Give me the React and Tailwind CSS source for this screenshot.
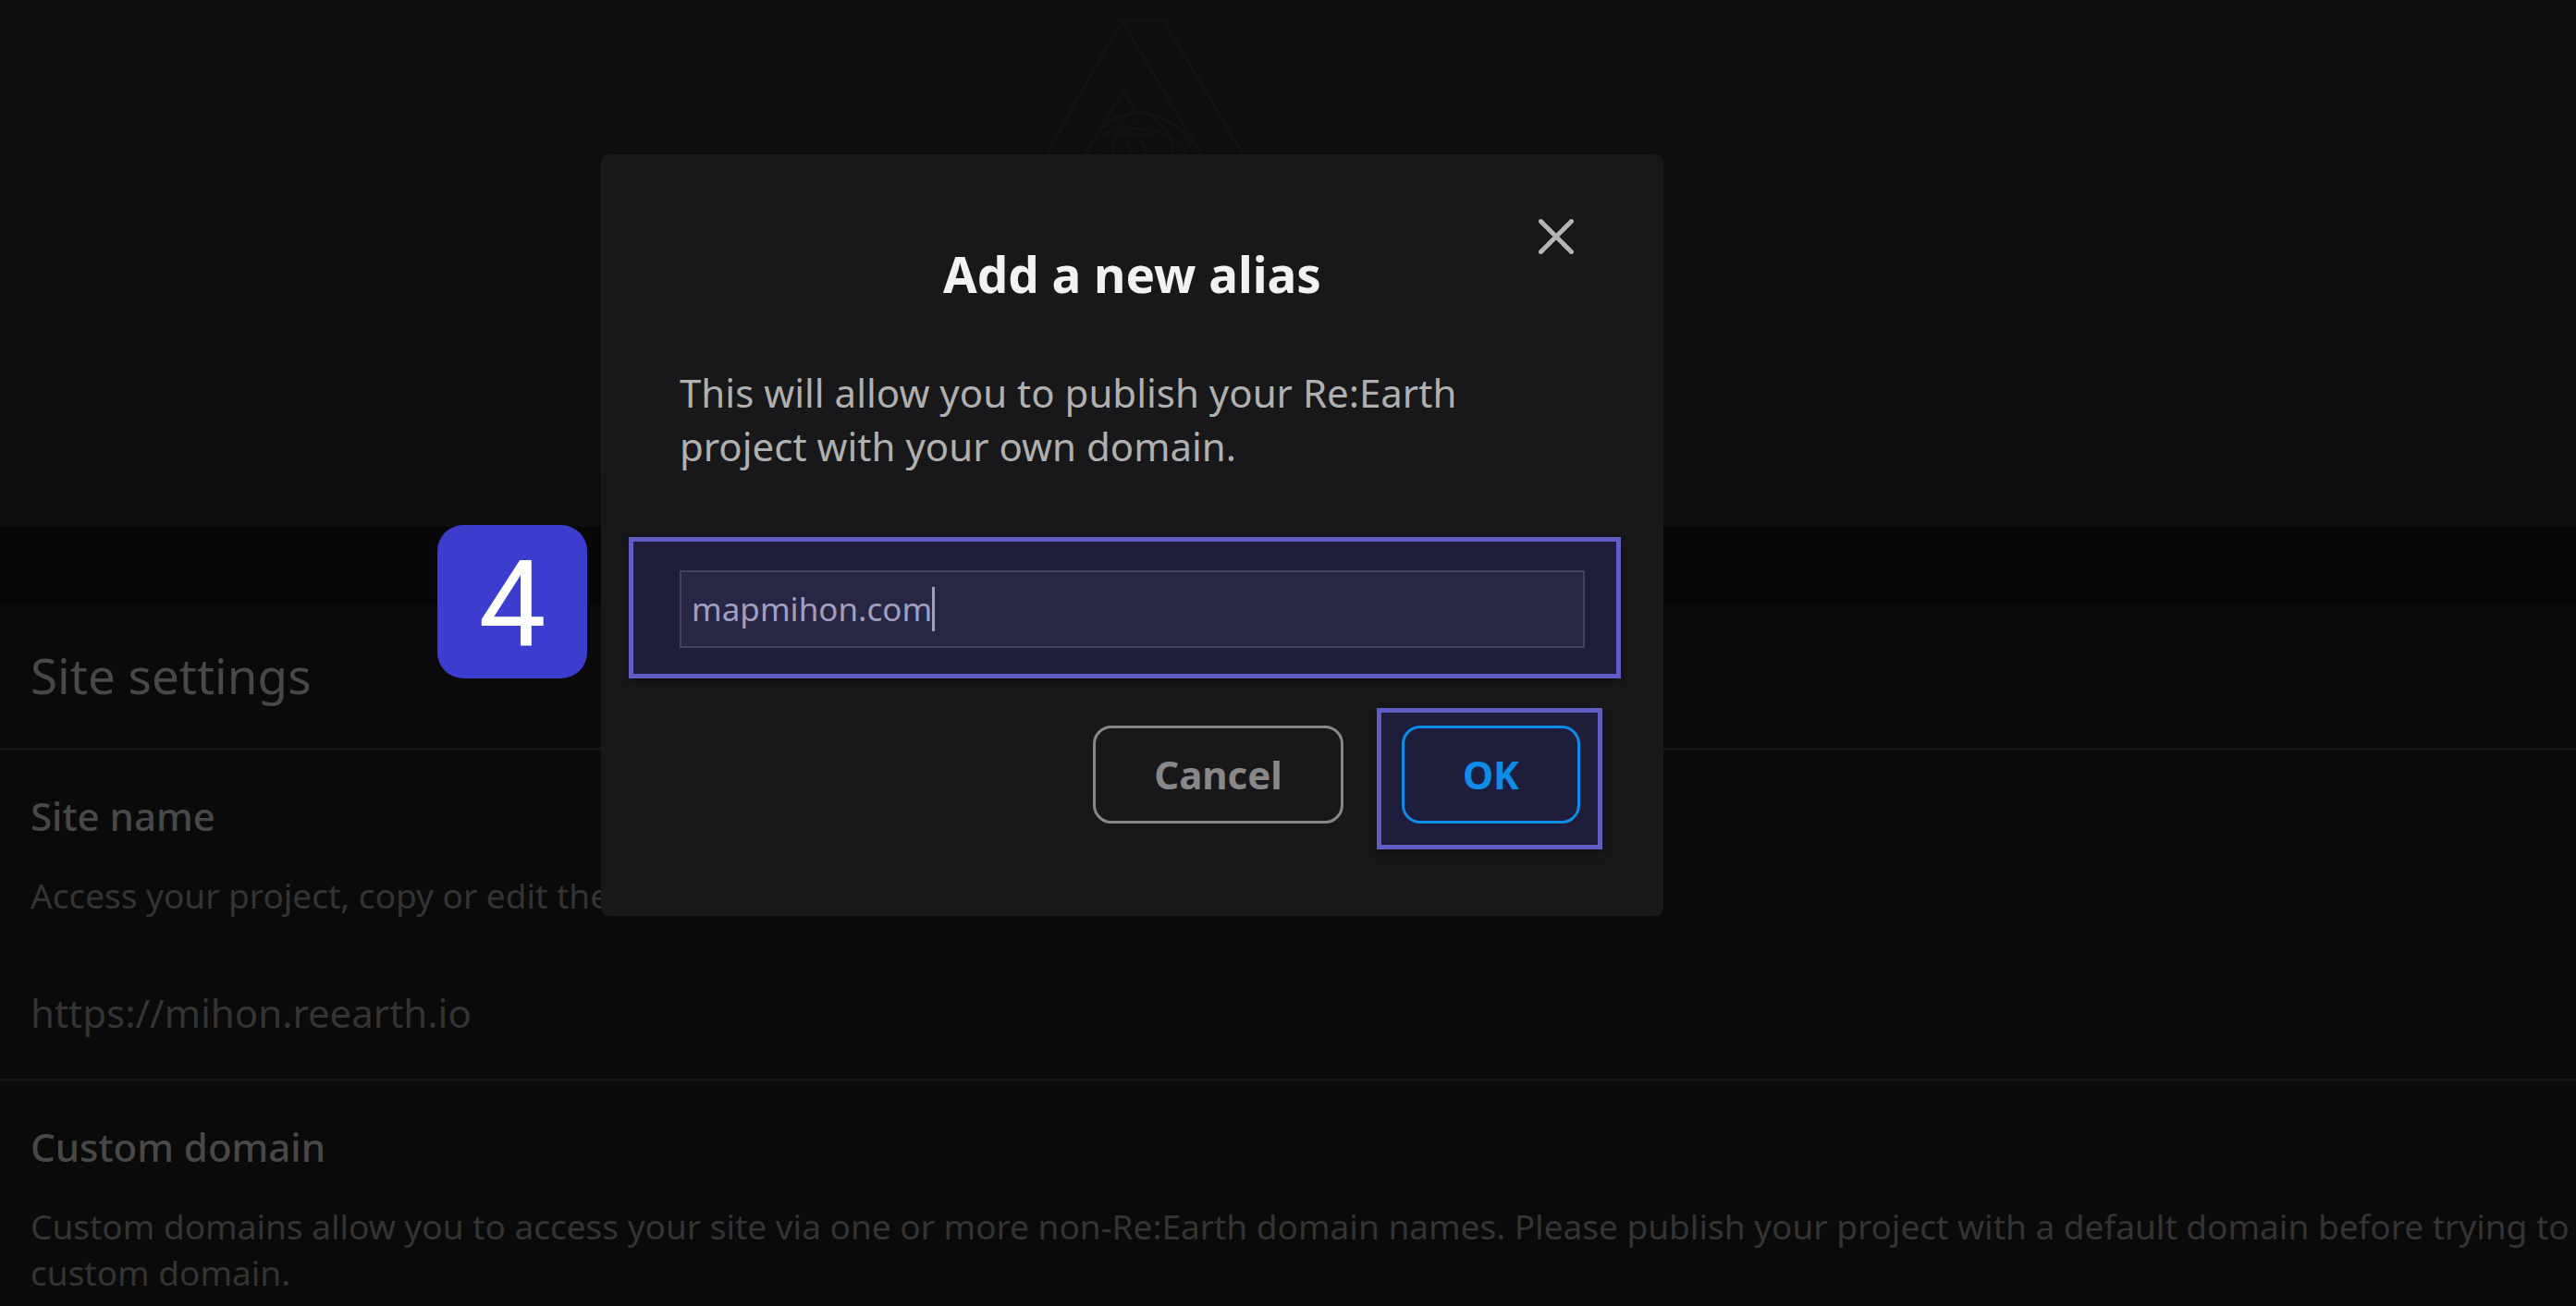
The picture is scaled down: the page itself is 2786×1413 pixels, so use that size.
function BackdropLogo() {
  return (
    <svg viewBox="0 0 240 160" className="h-[160px] w-[240px]" fill="none" stroke="#121212" strokeWidth="4" aria-hidden="true">
      <path d="M16 162 L98 17 H144 L230 162" />
      <path d="M100 19 L185 162" />
      <path d="M58 162 L100 92 L114 115" />
      <path d="M69 144 C86 106 148 106 174 150" />
      <path d="M66 147 C88 128 142 124 170 162 M80 130 C104 130 120 142 126 162 M104 120 C90 130 88 146 90 162 M126 116 C144 128 154 144 154 162 M94 140 H134 M100 128 L108 162 M74 162 L114 124" strokeWidth="3" />
    </svg>
  );
}

function Section({ title, children }) {
  return (
    <section className="flex flex-col px-[33px] pt-[42px] pb-[42px]">
      <h3 className="text-[42px] leading-[58px] font-medium text-[#484848]">{title}</h3>
      {children}
    </section>
  );
}

function Highlight({ className }) {
  return (
    <span
      aria-hidden="true"
      className={`pointer-events-none absolute border-5 border-[#605dc4] bg-[#1e1e3c] shadow-[0_4px_8px_rgba(0,0,0,0.3)] ${className}`}
    />
  );
}

function AliasDialog() {
  return (
    <div
      role="dialog"
      aria-labelledby="alias-title"
      className="absolute top-[167px] left-[650px] w-[1149px] rounded-lg bg-[#18181a] px-[85px] pt-[92px] pb-[100px]"
    >
      <button type="button" aria-label="Close" className="absolute top-[70px] right-[97px]">
        <svg viewBox="0 0 38 38" className="size-[38px]" stroke="#b4b4b4" strokeWidth="5" strokeLinecap="round" aria-hidden="true">
          <path d="M2.5 2.5 L35.5 35.5 M35.5 2.5 L2.5 35.5" />
        </svg>
      </button>
      <h1 id="alias-title" className="text-center text-[53px] leading-[76px] font-bold text-[#f2f2f2]">
        Add a new alias
      </h1>
      <p className="mt-[61px] text-[42px] leading-[58px] text-[#b0b0b0]">
        This will allow you to publish your Re:Earth
        <br />
        project with your own domain.
      </p>
      <div className="relative mt-[105px]">
        <Highlight className="-top-[36px] -right-[39px] -bottom-[33px] -left-[55px]" />
        <label className="relative flex h-[84px] items-center border-2 border-[#454162] bg-[#282645] pl-[11px]">
          <input
            aria-label="Alias"
            defaultValue="mapmihon.com"
            className="field-sizing-content bg-transparent text-[35px] leading-[50px] text-[#a09fc0] outline-none"
          />
          <span aria-hidden="true" className="h-[48px] w-[3px] bg-[#a09fc0]" />
        </label>
      </div>
      <div className="mt-[84px] flex justify-end gap-[63px] pr-[5px]">
        <button type="button" className="h-[106px] rounded-[20px] border-3 border-[#888888] px-[63px] text-[42px] leading-[58px] font-bold text-[#888888]">
          Cancel
        </button>
        <div className="relative">
          <Highlight className="-top-[19px] -right-[24px] -bottom-[28px] -left-[27px]" />
          <button type="button" className="relative h-[106px] rounded-[20px] border-3 border-[#0e8de8] px-[63px] text-[42px] leading-[58px] font-bold text-[#0e8de8]">
            OK
          </button>
        </div>
      </div>
    </div>
  );
}

export default function App() {
  return (
    <div className="relative min-h-screen overflow-hidden bg-[#070707] font-['Noto_Sans',sans-serif]">
      <div className="h-[570px] bg-[#0d0d0d]">
        <div className="ml-[603px] flex h-[513px] w-[1263px] justify-center bg-[#0e0e10] pt-[6px]">
          <BackdropLogo />
        </div>
      </div>
      <main className="mt-[84px] divide-y-3 divide-[#161616] bg-[#0a0a0a]">
        <h2 className="px-[33px] pt-[41px] pb-[42px] text-[53px] leading-[72px] text-[#484848]">Site settings</h2>
        <Section title="Site name">
          <p className="mt-[32px] text-[37px] leading-[50px] text-[#343434]">Access your project, copy or edit the</p>
          <p className="mt-[73px] text-[42px] leading-[58px] text-[#343434]">https://mihon.reearth.io</p>
        </Section>
        <Section title="Custom domain">
          <p className="mt-[32px] text-[37px] leading-[50px] whitespace-nowrap text-[#343434]">
            Custom domains allow you to access your site via one or more non-Re:Earth domain names. Please publish your
            project with a default domain before trying to connect a
            <br />
            custom domain.
          </p>
        </Section>
      </main>
      <AliasDialog />
      <div className="absolute top-[568px] left-[473px] flex h-[166px] w-[162px] items-center justify-center rounded-[28px] bg-[#3c3ccf] pt-[5px] font-['Roboto',sans-serif] text-[130px] leading-none text-white">
        4
      </div>
    </div>
  );
}
